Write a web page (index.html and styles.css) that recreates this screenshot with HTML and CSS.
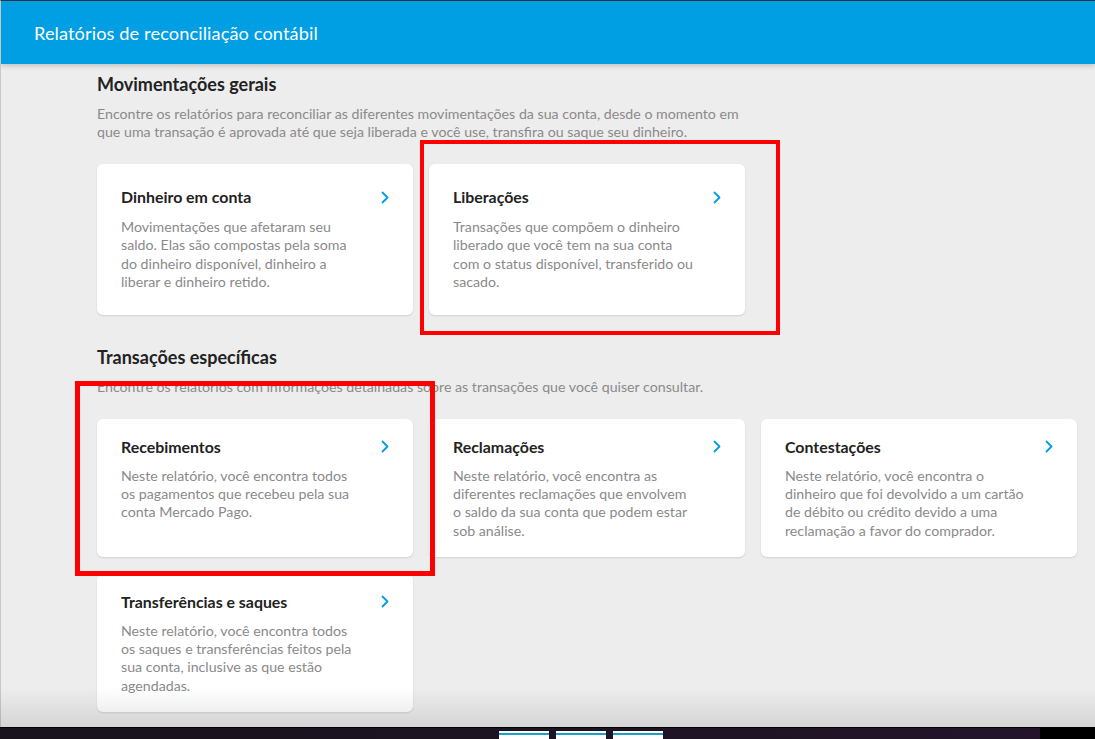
FILE: index.html
```html
<!DOCTYPE html>
<html lang="pt-BR">
<head>
  <meta charset="UTF-8">
  <meta name="viewport" content="width=device-width, initial-scale=1">
  <title>Relatórios de reconciliação contábil</title>
  <link rel="stylesheet" href="styles.css">
</head>
<body>
  <header class="topbar">
    <h1 class="topbar-title">Relatórios de reconciliação contábil</h1>
  </header>

  <main class="content">
    <!-- Movimentações gerais -->
    <section class="section section-general">
      <h2 class="section-title">Movimentações gerais</h2>
      <p class="section-desc">Encontre os relatórios para reconciliar as diferentes movimentações da sua conta, desde o momento em que uma transação é aprovada até que seja liberada e você use, transfira ou saque seu dinheiro.</p>
      <div class="cards">
        <a class="card" href="#">
          <div class="card-head">
            <span class="card-title">Dinheiro em conta</span>
            <svg class="chevron" width="8" height="13" viewBox="0 0 8 13"><path d="M1.5 1.5l5 5-5 5" fill="none" stroke="#009ee3" stroke-width="1.8" stroke-linecap="round" stroke-linejoin="round"/></svg>
          </div>
          <p class="card-text">Movimentações que afetaram seu saldo. Elas são compostas pela soma do dinheiro disponível, dinheiro a liberar e dinheiro retido.</p>
        </a>
        <a class="card" href="#">
          <div class="card-head">
            <span class="card-title">Liberações</span>
            <svg class="chevron" width="8" height="13" viewBox="0 0 8 13"><path d="M1.5 1.5l5 5-5 5" fill="none" stroke="#009ee3" stroke-width="1.8" stroke-linecap="round" stroke-linejoin="round"/></svg>
          </div>
          <p class="card-text">Transações que compõem o dinheiro liberado que você tem na sua conta com o status disponível, transferido ou sacado.</p>
        </a>
      </div>
    </section>

    <!-- Transações específicas -->
    <section class="section">
      <h2 class="section-title">Transações específicas</h2>
      <p class="section-desc">Encontre os relatórios com informações detalhadas sobre as transações que você quiser consultar.</p>
      <div class="cards">
        <a class="card" href="#">
          <div class="card-head">
            <span class="card-title">Recebimentos</span>
            <svg class="chevron" width="8" height="13" viewBox="0 0 8 13"><path d="M1.5 1.5l5 5-5 5" fill="none" stroke="#009ee3" stroke-width="1.8" stroke-linecap="round" stroke-linejoin="round"/></svg>
          </div>
          <p class="card-text">Neste relatório, você encontra todos os pagamentos que recebeu pela sua conta Mercado Pago.</p>
        </a>
        <a class="card" href="#">
          <div class="card-head">
            <span class="card-title">Reclamações</span>
            <svg class="chevron" width="8" height="13" viewBox="0 0 8 13"><path d="M1.5 1.5l5 5-5 5" fill="none" stroke="#009ee3" stroke-width="1.8" stroke-linecap="round" stroke-linejoin="round"/></svg>
          </div>
          <p class="card-text">Neste relatório, você encontra as diferentes reclamações que envolvem o saldo da sua conta que podem estar sob análise.</p>
        </a>
        <a class="card" href="#">
          <div class="card-head">
            <span class="card-title">Contestações</span>
            <svg class="chevron" width="8" height="13" viewBox="0 0 8 13"><path d="M1.5 1.5l5 5-5 5" fill="none" stroke="#009ee3" stroke-width="1.8" stroke-linecap="round" stroke-linejoin="round"/></svg>
          </div>
          <p class="card-text">Neste relatório, você encontra o dinheiro que foi devolvido a um cartão de débito ou crédito devido a uma reclamação a favor do comprador.</p>
        </a>
        <a class="card" href="#">
          <div class="card-head">
            <span class="card-title">Transferências e saques</span>
            <svg class="chevron" width="8" height="13" viewBox="0 0 8 13"><path d="M1.5 1.5l5 5-5 5" fill="none" stroke="#009ee3" stroke-width="1.8" stroke-linecap="round" stroke-linejoin="round"/></svg>
          </div>
          <p class="card-text">Neste relatório, você encontra todos os saques e transferências feitos pela sua conta, inclusive as que estão agendadas.</p>
        </a>
      </div>
    </section>
  </main>

  <!-- marcações vermelhas por cima da captura -->
  <div class="mark mark-liberacoes"></div>
  <div class="mark mark-recebimentos"></div>

  <!-- sombra e barra de tarefas da captura -->
  <div class="fade"></div>
  <div class="taskbar">
    <span class="task-item"></span>
    <span class="task-item"></span>
    <span class="task-item"></span>
  </div>
</body>
</html>
```

FILE: styles.css
```css
/* Página de relatórios */
body {
  margin: 0;
  padding: 0;
  background: #ededed;
  font-family: Lato, "Open Sans", Arial, sans-serif;
  color: #333;
  min-height: 100vh;
  border-top: 1px solid #2d3440;
  border-left: 1px solid #c8c8c8;
  box-sizing: border-box;
  overflow: hidden;
}
.topbar {
  background: #009ee3;
  height: 63px;
  display: flex;
  align-items: center;
  padding-left: 33px;
  box-shadow: 0 2px 5px rgba(0, 0, 0, 0.18);
  position: relative;
  z-index: 1;
}
.topbar-title {
  margin: 0;
  font-size: 18.2px;
  font-weight: 400;
  color: #fff;
  letter-spacing: 0.1px;
}
.content {
  padding: 9px 0 0 96px;
  width: 980px;
}
.section {
  margin-bottom: 32px;
}
.section-general {
  margin-bottom: 31px;
}
.section-title {
  margin: 0;
  font-size: 18px;
  font-weight: 700;
  color: #222;
  line-height: 22px;
}
.section-desc {
  margin: 10px 0 0;
  max-width: 650px;
  font-size: 14.2px;
  line-height: 17.5px;
  color: #8a8a8a;
}
.cards {
  display: grid;
  grid-template-columns: repeat(3, 316px);
  gap: 17px 16px;
  margin-top: 23px;
}
.section-general .cards {
  margin-top: 24px;
}
.card {
  background: #fff;
  border-radius: 6px;
  box-shadow: 0 1px 2px rgba(0, 0, 0, 0.12);
  padding: 19px 24px 17px;
  text-decoration: none;
  color: inherit;
  display: block;
}
.section-general .card {
  padding: 24px 24px 24px;
}
.section-general .card-text {
  margin-top: 12px;
}
.card-head {
  display: flex;
  justify-content: space-between;
  align-items: center;
}
.card-title {
  font-size: 15.9px;
  font-weight: 700;
  color: #222;
  line-height: 18px;
}
.chevron {
  display: block;
}
.card-text {
  margin: 11px 0 0;
  max-width: 240px;
  font-size: 14.2px;
  line-height: 18.3px;
  color: #8a8a8a;
}

/* Marcações vermelhas */
.mark {
  position: absolute;
  width: 360px;
  height: 195px;
  border: 4px solid #ff0000;
  box-sizing: border-box;
  z-index: 3;
}
.mark-liberacoes {
  left: 420px;
  top: 140px;
}
.mark-recebimentos {
  left: 75px;
  top: 381px;
  border-width: 5px;
}

/* Sombra inferior e barra de tarefas */
.fade {
  position: fixed;
  left: 0;
  right: 0;
  bottom: 11px;
  height: 40px;
  background: linear-gradient(rgba(0, 0, 0, 0), rgba(0, 0, 0, 0.1));
  z-index: 2;
}
.taskbar {
  position: fixed;
  left: 0;
  right: 0;
  bottom: 0;
  height: 11px;
  background: linear-gradient(90deg, #18131c 0%, #1f1424 70%, #23142a 95%, #000 95%);
  border-top: 1px solid #000;
  display: flex;
  gap: 7px;
  padding-left: 499px;
  z-index: 4;
}
.task-item {
  width: 50px;
  margin-top: 3px;
  background: #fff;
  border-top: 2px solid #fff;
  box-shadow: inset 0 2px 0 #1aa0c9;
}
```
